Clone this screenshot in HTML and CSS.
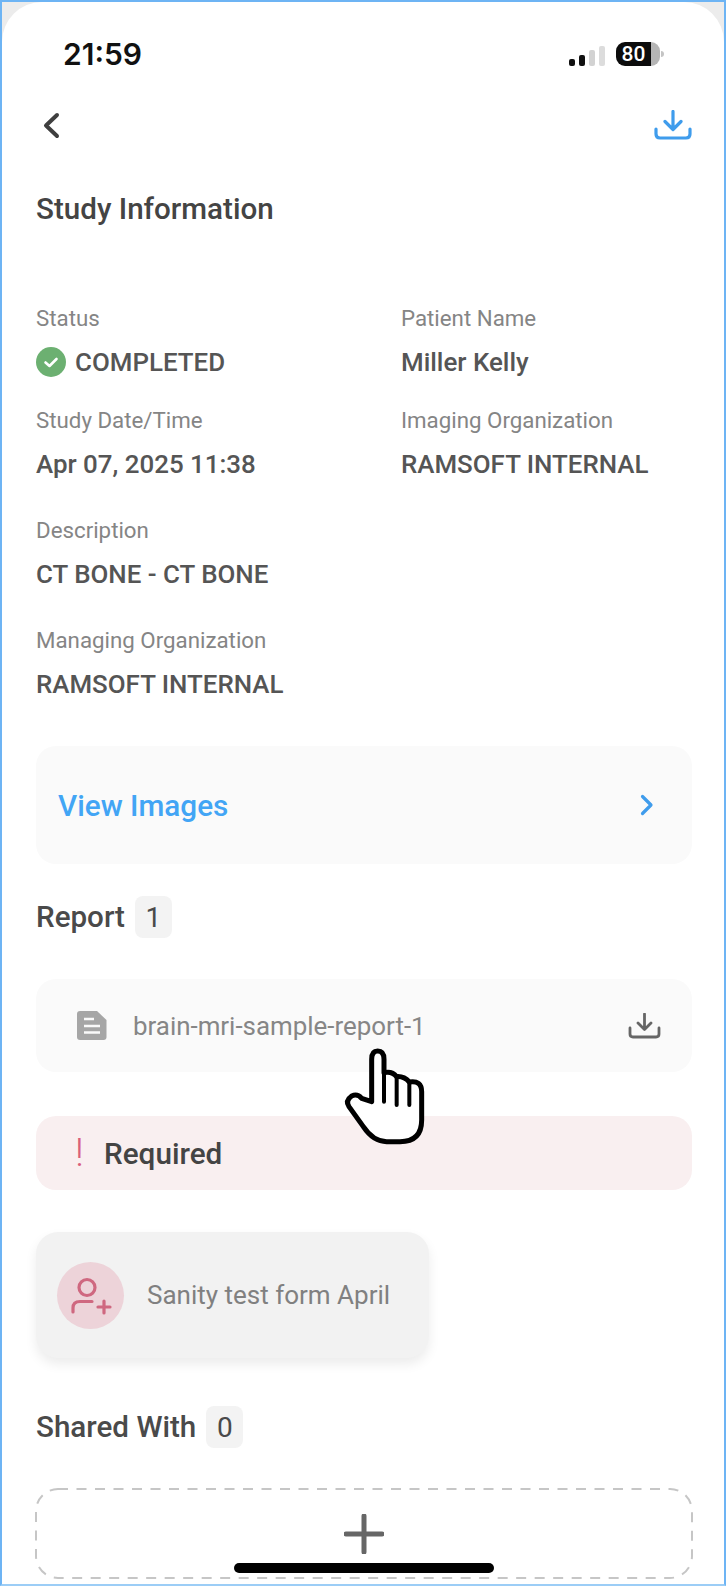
FILE: index.html
```html
<!DOCTYPE html>
<html>
<head>
  <link rel="stylesheet" href="styles.css">
</head>
<body>

<div class="frame">
  <div class="screen">

    <div class="status-bar">
      <span class="time">21:59</span>
      <div class="status-icons">
        <div class="signal">
          <span class="bar bar1"></span>
          <span class="bar bar2"></span>
          <span class="bar bar3"></span>
          <span class="bar bar4"></span>
        </div>
        <div class="battery"><span class="battery-level">80</span></div>
        <span class="battery-tip"></span>
      </div>
    </div>

    <div class="nav">
      <svg class="back-icon" width="18" height="27" viewBox="0 0 18 27">
        <path d="M15 3 L4 13.5 L15 24" fill="none" stroke="#3f3f3f" stroke-width="4" stroke-linecap="round" stroke-linejoin="round"/>
      </svg>
      <svg class="save-icon" width="38" height="30" viewBox="0 0 38 30">
        <path d="M19 1.5 V19 M11 11.5 L19 19.5 L27 11.5" fill="none" stroke="#3f9cec" stroke-width="3.2" stroke-linecap="round" stroke-linejoin="round"/>
        <path d="M2 19 V24 Q2 28 6 28 H32 Q36 28 36 24 V19" fill="none" stroke="#3f9cec" stroke-width="3.2" stroke-linecap="round"/>
      </svg>
    </div>

    <h2 class="page-title">Study Information</h2>

    <div class="info-grid">
      <div class="info-item">
        <div class="info-label">Status</div>
        <div class="info-value status-value">
          <svg width="30" height="30" viewBox="0 0 30 30">
            <circle cx="15" cy="15" r="15" fill="#6cb071"/>
            <path d="M9.5 15.5 L13.5 19 L20.5 12" fill="none" stroke="#fff" stroke-width="2.6" stroke-linecap="round" stroke-linejoin="round"/>
          </svg>
          COMPLETED
        </div>
      </div>
      <div class="info-item">
        <div class="info-label">Patient Name</div>
        <div class="info-value">Miller Kelly</div>
      </div>
      <div class="info-item row-two">
        <div class="info-label">Study Date/Time</div>
        <div class="info-value">Apr 07, 2025 11:38</div>
      </div>
      <div class="info-item row-two">
        <div class="info-label">Imaging Organization</div>
        <div class="info-value">RAMSOFT INTERNAL</div>
      </div>
      <div class="info-item wide row-wide">
        <div class="info-label">Description</div>
        <div class="info-value">CT BONE - CT BONE</div>
      </div>
      <div class="info-item wide row-wide">
        <div class="info-label">Managing Organization</div>
        <div class="info-value">RAMSOFT INTERNAL</div>
      </div>
    </div>

    <div class="view-images">
      <span>View Images</span>
      <svg width="14" height="22" viewBox="0 0 14 22">
        <path d="M2.5 2.5 L11 11 L2.5 19.5" fill="none" stroke="#3f9cec" stroke-width="3.2" stroke-linecap="round" stroke-linejoin="round"/>
      </svg>
    </div>

    <div class="section-head report-head">
      <span>Report</span>
      <span class="count">1</span>
    </div>

    <div class="report-row">
      <svg class="doc-icon" width="30" height="29" viewBox="0 0 30 29">
        <path d="M3 0 H20 L29.5 9 V26 Q29.5 29 26.5 29 H3 Q0 29 0 26 V3 Q0 0 3 0 Z" fill="#a6a6a6"/>
        <path d="M7 8 H17 M7 15 H23 M7 21.5 H23" stroke="#fafafa" stroke-width="2.6"/>
      </svg>
      <span class="report-name">brain-mri-sample-report-1</span>
      <svg class="report-save" width="33" height="26" viewBox="0 0 33 26">
        <path d="M16.5 1 V16 M10 10 L16.5 16.5 L23 10" fill="none" stroke="#666" stroke-width="2.8" stroke-linecap="round" stroke-linejoin="round"/>
        <path d="M2 15 V21 Q2 24 5 24 H28 Q31 24 31 21 V15" fill="none" stroke="#666" stroke-width="2.8" stroke-linecap="round"/>
      </svg>
    </div>

    <div class="required">
      <span class="required-mark">!</span>
      <span>Required</span>
    </div>

    <div class="form-card">
      <div class="form-avatar">
        <svg width="42" height="42" viewBox="0 0 42 42">
          <circle cx="17" cy="13.5" r="8" fill="none" stroke="#cf6880" stroke-width="3.2"/>
          <path d="M3 38 V34 Q3 27.5 10 27.5 H22" fill="none" stroke="#cf6880" stroke-width="3.2" stroke-linecap="round"/>
          <path d="M34 27 V39 M28 33 H40" stroke="#cf6880" stroke-width="3.2" stroke-linecap="round"/>
        </svg>
      </div>
      <span class="form-name">Sanity test form April</span>
    </div>

    <div class="section-head shared-head">
      <span>Shared With</span>
      <span class="count">0</span>
    </div>

    <div class="add-share">
      <svg class="dash-outline" width="658" height="91" viewBox="0 0 658 91">
        <rect x="1" y="1" width="656" height="89" rx="22" fill="none" stroke="#c6c6c6" stroke-width="2" stroke-dasharray="10 8.5"/>
      </svg>
      <svg width="40" height="40" viewBox="0 0 40 40">
        <path d="M20 2 V38 M2 20 H38" stroke="#666" stroke-width="5" stroke-linecap="round"/>
      </svg>
    </div>

  </div>

  <div class="home-bar"></div>

  <svg class="hand-cursor" width="120" height="130" viewBox="0 0 360 390">
    <path d="M155 215 V88 Q155 63 173 63 Q192 63 192 88 V128 Q216 122 230 140 Q252 138 268 156 Q305 150 305 185 V270 Q305 335 240 335 H200 Q160 335 130 290 L87 230 Q75 212 95 198 Q112 190 125 205 Z" fill="#fff" stroke="#000" stroke-width="15" stroke-linejoin="round"/>
    <path d="M192 128 V215 M230 140 V225 M268 156 V225" fill="none" stroke="#000" stroke-width="12" stroke-linecap="round"/>
  </svg>
</div>

</body>
</html>
```

FILE: styles.css
```css
* {
  box-sizing: border-box;
}

body {
  margin: 0;
  background: #fff;
  font-family: Roboto, "Liberation Sans", sans-serif;
}

.frame {
  position: relative;
  width: 726px;
  height: 1586px;
  border: 2px solid #6db4f4;
  border-bottom-color: #9ccdf6;
  background: #ececec;
  overflow: hidden;
}

.screen {
  height: 100%;
  padding: 0 32px 0 34px;
  background: #fff;
  border-radius: 40px 40px 0 0;
  overflow: hidden;
}

/* status bar */
.status-bar {
  display: flex;
  justify-content: space-between;
  align-items: flex-start;
  height: 103px;
  padding: 35px 28px 0 27px;
}

.time {
  font-family: Inter, Roboto, sans-serif;
  font-size: 30px;
  font-weight: 600;
  line-height: 34px;
  color: #111;
}

.status-icons {
  display: flex;
  align-items: center;
  height: 34px;
}

.signal {
  display: flex;
  align-items: flex-end;
  gap: 4px;
  height: 20px;
  margin-top: 4px;
  margin-right: 11px;
}

.bar {
  width: 6px;
  border-radius: 2px;
  background: #111;
}

.bar1 { height: 7px; }
.bar2 { height: 11px; }
.bar3 { height: 16px; background: #d2d2d2; }
.bar4 { height: 20px; background: #dcdcdc; }

.battery {
  width: 44px;
  height: 24px;
  border-radius: 9px;
  background: linear-gradient(to right, #0c0c0c 79%, #b5b5b5 79%);
}

.battery-level {
  display: block;
  width: 35px;
  text-align: center;
  font-size: 21px;
  font-weight: 500;
  line-height: 24px;
  color: #fff;
}

.battery-tip {
  width: 3px;
  height: 6px;
  margin-left: 1px;
  border-radius: 0 3px 3px 0;
  background: #c4c4c4;
}

/* nav */
.nav {
  display: flex;
  justify-content: space-between;
  align-items: center;
  height: 40px;
  padding-left: 6px;
}

.page-title {
  margin: 46px 0 0;
  font-size: 29.6px;
  font-weight: 500;
  line-height: 36px;
  color: #444;
}

/* study info */
.info-grid {
  display: grid;
  grid-template-columns: 365px 1fr;
  margin-top: 78px;
}

.info-item.row-two {
  margin-top: 29px;
}

.info-item.row-wide {
  margin-top: 37px;
}

.info-item.wide {
  grid-column: 1 / 3;
}

.info-label {
  font-size: 22.3px;
  line-height: 26px;
  color: #858585;
}

.info-value {
  margin-top: 15px;
  font-size: 25.9px;
  font-weight: 500;
  line-height: 32px;
  color: #555;
}

.status-value {
  display: flex;
  align-items: center;
  gap: 9px;
}

/* view images */
.view-images {
  display: flex;
  justify-content: space-between;
  align-items: center;
  height: 118px;
  margin-top: 46px;
  padding: 0 38px 0 22px;
  border-radius: 20px;
  background: #fafafa;
  font-size: 29.7px;
  font-weight: 500;
  color: #42a5f5;
}

/* section headings */
.section-head {
  display: flex;
  align-items: center;
  gap: 10px;
  height: 42px;
  font-size: 29.6px;
  font-weight: 500;
  color: #4a4a4a;
}

.report-head {
  margin-top: 32px;
}

.shared-head {
  margin-top: 48px;
}

.count {
  display: flex;
  justify-content: center;
  align-items: center;
  min-width: 37px;
  height: 42px;
  padding: 0 5px;
  border-radius: 8px;
  background: #f3f3f3;
  font-size: 28px;
  font-weight: 400;
}

/* report */
.report-row {
  display: flex;
  align-items: center;
  height: 93px;
  margin-top: 41px;
  padding: 0 31px 0 41px;
  border-radius: 20px;
  background: #fafafa;
}

.report-name {
  flex: 1;
  margin-left: 26px;
  font-size: 25.9px;
  color: #868686;
}

.required {
  display: flex;
  align-items: center;
  height: 74px;
  margin-top: 44px;
  padding-left: 39px;
  border-radius: 20px;
  background: #f9eff0;
  font-size: 29.7px;
  font-weight: 500;
  color: #444;
}

.required-mark {
  width: 29px;
  font-size: 39px;
  font-weight: 300;
  color: #d9607a;
}

/* form card */
.form-card {
  display: flex;
  align-items: center;
  width: 393px;
  height: 126px;
  margin-top: 42px;
  padding-left: 21px;
  border-radius: 22px;
  background: #f2f2f2;
  box-shadow: 0 6px 12px rgba(0, 0, 0, 0.08);
}

.form-avatar {
  display: flex;
  justify-content: center;
  align-items: center;
  width: 67px;
  height: 67px;
  border-radius: 50%;
  background: #edd3d9;
}

.form-name {
  margin-left: 23px;
  font-size: 26px;
  color: #808080;
}

/* shared with */
.add-share {
  position: relative;
  display: flex;
  justify-content: center;
  align-items: flex-start;
  height: 91px;
  margin-top: 40px;
  padding-top: 26px;
}

.dash-outline {
  position: absolute;
  left: -1px;
  top: 0;
}

/* overlays */
.home-bar {
  position: absolute;
  left: 232px;
  top: 1561px;
  width: 260px;
  height: 10px;
  border-radius: 5px;
  background: #000;
}

.hand-cursor {
  position: absolute;
  left: 318px;
  top: 1028px;
}
```
